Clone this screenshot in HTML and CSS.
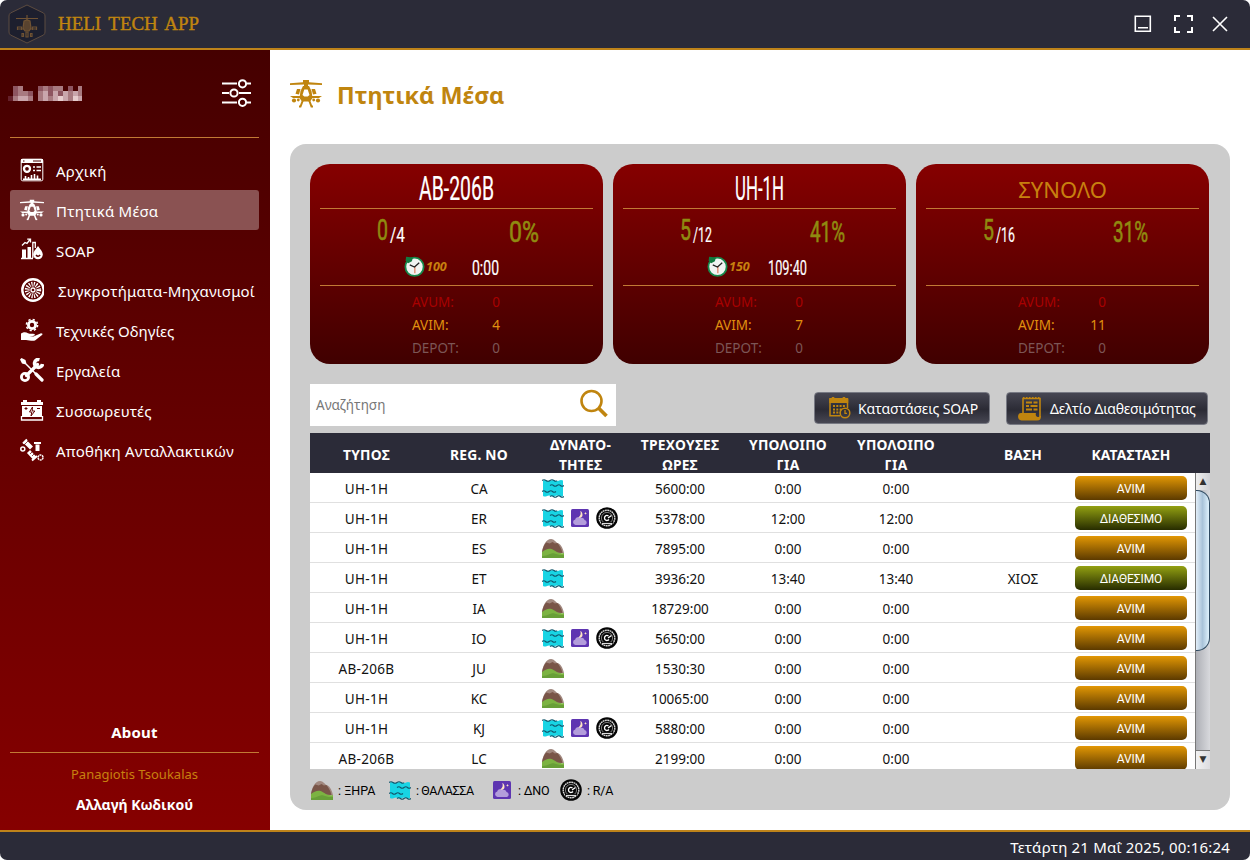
FILE: index.html
```html
<!DOCTYPE html>
<html lang="el">
<head>
<meta charset="utf-8">
<title>Heli Tech App</title>
<link rel="stylesheet" href="styles.css">
</head>
<body>
<svg class="defs" width="0" height="0">
  <symbol id="heli" viewBox="0 0 32 28">
    <path fill="currentColor" d="M0 3.300 13 2.200V0h6v2.200l13 1.100v1.700L18 4.400V7h-4V4.400L0 5z"/>
    <path fill="currentColor" fill-rule="evenodd" d="M13 6h6l2.500 5 1 7-2.500 3.500h-8L9.500 18l1-7zM14.300 9.500l-1.800 5.500 1.800 1.500h3.400l1.800-1.500-1.800-5.500z"/>
    <path fill="currentColor" d="M7 9h3.500L9 14.500l-3.500-.8zM25 9h-3.500l1.500 5.500 3.500-.8zM0 16h12v2H3zM32 16H20v2h9z"/>
    <circle cx="4" cy="20.500" r="2.100" fill="currentColor"/><circle cx="28" cy="20.500" r="2.100" fill="currentColor"/>
    <circle cx="8.300" cy="20" r="1.400" fill="currentColor"/><circle cx="23.700" cy="20" r="1.400" fill="currentColor"/>
    <path fill="none" stroke="currentColor" stroke-width="2" d="m13 20-2.500 6.500H9M19 20l2.500 6.500H23"/>
  </symbol>
  <symbol id="sea" viewBox="0 0 22 19">
    <path fill="#18d4e4" d="M1 1.500q2-1 4 0t4 0 4 0 4 0 4 0V17q-2 1-4 0t-4 0-4 0-4 0-4 0z"/>
    <path fill="none" stroke="#12566b" stroke-width="1.100" d="M0 1.500q2-1.500 4 0t4 0 4 0 3 0M8 6.500q2-1.500 3.500 0t3.500 0 3.500 0 3.500 0M0 12.500q2-1.500 3.500 0t3.500 0 3.500 0 3.500 0M8 17.500q2-1.500 3.500 0t3.500 0 3.500 0 3.500 0"/>
  </symbol>
  <symbol id="land" viewBox="0 0 23 19" preserveAspectRatio="none">
    <path fill="#a1887f" d="M0 13C1 7 4 0 9.500 0c3 0 5 3 6.500 4 3 .5 5.500 4 7 10z"/>
    <path fill="#795548" d="M0 13C1 8 3 4.500 4.500 3.500L8 4.500l3-1.500 2.500 1.500L16 4c2 2 4 5 5.500 10z"/>
    <path fill="#7cb342" d="M0 19v-6c3-2.500 7-4 10-3 4 1.300 6 5 13 4v5z"/>
    <path fill="#689f38" d="M0 19v-2c6 .5 9-3.500 13-2.500 3 .8 5 2 10 1.500v3z"/>
  </symbol>
  <symbol id="night" viewBox="0 0 18 18">
    <rect width="18" height="18" rx="1.500" fill="#5e35b1"/>
    <path fill="#ffe6c4" d="M9.300 2c1 3 .3 5-2.300 6.700 2.500.8 4.500-.6 4.500-2.700S10.700 2.700 9.300 2zM14.500 3l.5 1 1 .4-1 .4-.5 1-.5-1-1-.4 1-.4z"/>
    <path fill="#b39ddb" d="M4.500 16a2.800 2.800 0 0 1-.3-5.500 3 3 0 0 1 5-1.500 3 3 0 0 1 4.300 2A2.600 2.600 0 0 1 14 16z"/>
  </symbol>
  <symbol id="gauge" viewBox="0 0 22 22">
    <circle cx="11" cy="11" r="10.800" fill="#050505"/>
    <circle cx="11" cy="11" r="7.800" fill="none" stroke="#d8d8d8" stroke-width="1.400" stroke-dasharray="1.800 .5"/>
    <circle cx="11" cy="11" r="5.600" fill="none" stroke="#aaa" stroke-width=".7"/>
    <path fill="none" stroke="#fff" stroke-width="1.300" d="M15.500 8.500 12 11M12.500 9A2.500 2.500 0 1 0 13 12.500"/>
    <path fill="#050505" d="M5 15h12v1.500H5z"/>
    <path stroke="#ddd" stroke-width="1.200" d="M6 16.500h10"/>
  </symbol>
  <symbol id="clock" viewBox="0 0 20 20">
    <circle cx="10" cy="10.300" r="8.700" fill="#f1f4f2" stroke="#168a4c" stroke-width="1.700"/>
    <path fill="#127b40" d="M2 .8 8.500 1.500 7.500 5 4 7 1.500 4.500z"/>
    <path stroke="#e59980" stroke-width="1.500" d="M10.300 10v6.500"/>
    <path fill="none" stroke="#222" stroke-width="1.200" d="m5.500 8.500 4.500 2 4.500-4"/>
  </symbol>
</svg>

<div class="window">
  <header class="titlebar">
    <svg class="logo" viewBox="0 0 38 40">
      <path d="M19 1 35.500 9q1.500 1 1.500 3v16q0 2-1.500 3L19 39 2.500 31Q1 30 1 28V12q0-2 1.500-3z" fill="#1d1f2e" stroke="#5d4c40" stroke-width="1"/>
      <g stroke="#6f5233" stroke-width="1.200" fill="none"><path d="M8 14.500h22M19 11v6M9 25h20"/><path fill="#59432f" d="m16 17 3-1 3 1 1 7-2 3h-4l-2-3z"/><path d="M9.500 26v-3h4v3M24.500 26v-3h4v3M14 29.500v3h1.500v-3zM18 28v5h2v-5zM22.500 29.500v3h1.500v-3z"/></g>
    </svg>
    <svg class="brand" width="144" height="26"><text x="1" y="19" textLength="141" lengthAdjust="spacingAndGlyphs">HELI TECH APP</text></svg>
    <svg class="controls" width="96" height="20" fill="none" stroke="#fff" stroke-width="1.600">
      <path d="M2.300 2.300h15v15h-15zM5 13.800h10"/>
      <path stroke-width="2" d="M42 7V2h5M54 2h5v5M59 13v5h-5M47 18h-5v-5"/>
      <path d="m80 3 14 14M94 3 80 17"/>
    </svg>
  </header>

  <div class="middle">
    <aside class="sidebar">
      <div class="user">
        <svg class="mosaic" width="74" height="16" id="mosaic"></svg>
        <svg width="30" height="28" fill="none" stroke="#fff" stroke-width="2"><path d="M0 4.500h15M25 4.500h4M0 14h7M17 14h12M0 23.500h15M25 23.500h4"/><circle cx="20.500" cy="4.800" r="3.600"/><circle cx="12" cy="14" r="3.600"/><circle cx="20.500" cy="23.300" r="3.600"/></svg>
      </div>
      <nav class="menu">
        <a><svg viewBox="0 0 24 24"><rect x="1.200" y="1.200" width="21.600" height="21.600" rx="1.500" fill="none" stroke="#fff"/><path fill="#fff" d="M1 1h22v4H1z"/><path stroke="#4c0000" stroke-width="1.200" d="M3 3h1.500M13 3h8"/><circle cx="7" cy="10.800" r="3" fill="none" stroke="#fff" stroke-width="2.300"/><path stroke="#fff" stroke-width="1.600" d="M13 9h2M16.500 9H21M13 12.500h2M16.500 12.500H21M3 21.200h18M5.500 21v-3M8.500 21v-2M11.500 21v-4M14.500 21v-5M17.500 21v-3.500"/></svg><span>Αρχική</span></a>
        <a class="active"><svg viewBox="0 0 32 28"><use href="#heli"/></svg><span>Πτητικά Μέσα</span></a>
        <a><svg viewBox="0 0 24 24"><path fill="#fff" d="M2 11.500h4V20H2zM7.500 9H11v11H7.500z"/><path fill="none" stroke="#fff" stroke-width="1.300" d="M1 20.500h12M12.800 20V4.500h2.500V10M2 7.500l3-3 2 1 3-4M7.200 1.200H10.500V4.500"/><path fill="#fff" d="M18 8c3 4 4.800 6 4.800 8.500a4.800 4.800 0 0 1-9.600 0C13.200 14 15 12 18 8z"/><path stroke="#540000" stroke-width="1.400" d="M16 17q2 2.500 4.200 0" fill="none"/></svg><span>SOAP</span></a>
        <a><svg viewBox="0 0 24 24" fill="none" stroke="#fff"><circle cx="13" cy="12" r="10.700" stroke-width="2.400"/><circle cx="13" cy="12" r="5.800" stroke-width="4.800" stroke-dasharray="1.150 1.128"/><circle cx="13" cy="12" r="2" stroke-width="1.300"/></svg><span class="nudge">Συγκροτήματα-Μηχανισμοί</span></a>
        <a><svg viewBox="0 0 24 24"><circle cx="12" cy="7" r="3.600" fill="none" stroke="#fff" stroke-width="2.800"/><circle cx="12" cy="7" r="5.600" fill="none" stroke="#fff" stroke-width="1.500" stroke-dasharray="2.200 2.200"/><path fill="#fff" d="M1 15.500c3-2 5-1.500 7-.3 2 1 4.500.3 6.500.8 1 1-.3 2-2 2h-3l4 .6 7.500-3.300c1.500 0 2 1 1 1.800L15 22.500c-3 1-6-.5-9-.5H1z"/></svg><span class="tight">Τεχνικές Οδηγίες</span></a>
        <a><svg viewBox="0 0 24 24"><path stroke="#fff" stroke-width="3.200" stroke-linecap="round" d="m6.500 17.500 11-11M16 16l6 6"/><path stroke="#fff" stroke-width="1.500" d="M4 4l12 12"/><path fill="#fff" d="M0 1.500 1.500 0l4 2 .8 3-1.300 1.300L2 5.500z"/><circle cx="5" cy="19" r="3.600" fill="none" stroke="#fff" stroke-width="2.800"/><path fill="none" stroke="#fff" stroke-width="3.600" d="M19.500 1.500a4 4 0 1 0 3 4.500"/></svg><span>Εργαλεία</span></a>
        <a><svg viewBox="0 0 24 24"><path fill="#fff" d="M3 2h4v2h10V2h4v2h2v3H1V4h2zM2 8h20v11H2z"/><path fill="none" stroke="#fff" stroke-width="1.300" d="M1.500 18v4h21v-4"/><path fill="none" stroke="#620000" stroke-width="1" d="m12.500 9-3 5h2.300L11 18l3.800-5h-2.600zM4.500 10.500h3M6 9v3M17 10.500h3"/></svg><span>Συσσωρευτές</span></a>
        <a><svg viewBox="0 0 24 24" fill="none" stroke="#fff"><path stroke-width="4.200" d="m4.500 3 7 7M8.500 13.500l6.500 7"/><path stroke-width="2" d="M3 5.500 7 1.500M12 22.500 17 18M14 5h7"/><path stroke-width="4" d="M17.500 6.500V13"/><path stroke="#620000" stroke-width=".7" d="m5 6 4-4M10 16l3.500-3.500M12 18l3.500-3.500"/><circle cx="2.800" cy="11" r="2" stroke-width="1.500"/><circle cx="20.500" cy="19.500" r="2.500" stroke-width="1.500" stroke-dasharray="2 .6"/></svg><span>Αποθήκη Ανταλλακτικών</span></a>
      </nav>
      <div class="account">
        <a class="about">About</a>
        <div class="author">Panagiotis Tsoukalas</div>
        <a class="password">Αλλαγή Κωδικού</a>
      </div>
    </aside>

    <main class="content">
      <h1><svg viewBox="0 0 32 28"><use href="#heli"/></svg><span>Πτητικά Μέσα</span></h1>
      <section class="panel">
        <div class="cards" id="cards"></div>
        <div class="toolbar">
          <label class="search"><span>Αναζήτηση</span><svg width="30" height="30" fill="none" stroke="#c0850f"><circle cx="12.500" cy="12" r="10" stroke-width="2.600"/><path stroke-width="3.800" d="m19.500 19 8 8"/></svg></label>
          <button class="tool soap"><svg width="22" height="22" fill="none" stroke="#c0850f"><path stroke-width="1.500" d="M1 1.500v17.300h10M18.500 2v9"/><path fill="#c0850f" stroke="none" d="M.3 1h2.500V0h2.500v1h8.400V0h2.500v1h3v5H.3z"/><path stroke-width="2" stroke-dasharray="2 1.300" d="M4 9h12M4 12.500h9M4 15.500h7"/><circle cx="16" cy="16" r="4.800" stroke-width="1.500"/><path stroke-width="1.300" d="M16 13v3.300h2"/></svg><span>Καταστάσεις SOAP</span></button>
          <button class="tool report"><svg width="24" height="24" fill="none" stroke="#c0850f"><path stroke-width="1.600" d="M5 16V1.500h17V20"/><path stroke-width="2" stroke-dasharray="1.500 1.500" d="M5 1h17"/><path stroke-width="2" d="M8 5.500h6M15.500 5.500h4M8 9h3M12.500 9h7M8 12.500h6M15.500 12.500h4"/><path fill="#c0850f" stroke="none" d="M3 16h15c-1 3 1 4 2.500 4l2.500-1c0 3-1 4.500-4 4.500H3.500c-4.500 0-4.500-7.500-.5-7.500z"/></svg><span>Δελτίο Διαθεσιμότητας</span></button>
        </div>
        <div class="table">
          <div class="thead"><b>ΤΥΠΟΣ</b><b>REG. NO</b><b>ΔΥΝΑΤΟ-<br>ΤΗΤΕΣ</b><b>ΤΡΕΧΟΥΣΕΣ<br>ΩΡΕΣ</b><b>ΥΠΟΛΟΙΠΟ<br>ΓΙΑ</b><b>ΥΠΟΛΟΙΠΟ<br>ΓΙΑ</b><i></i><b>ΒΑΣΗ</b><b>ΚΑΤΑΣΤΑΣΗ</b></div>
          <div class="tbody">
            <div class="rows" id="rows"></div>
            <div class="scroll"><div class="up">▲</div><div class="track"><div class="thumb"></div></div><div class="down">▼</div></div>
          </div>
        </div>
        <div class="legend">
          <svg class="ico land"><use href="#land"/></svg><span class="l1">: ΞΗΡΑ</span>
          <svg class="ico sea"><use href="#sea"/></svg><span class="l2">: ΘΑΛΑΣΣΑ</span>
          <svg class="ico night"><use href="#night"/></svg><span class="l3">: ΔΝΟ</span>
          <svg class="ico gauge"><use href="#gauge"/></svg><span>: R/A</span>
        </div>
      </section>
    </main>
  </div>
  <footer class="statusbar"><span>Τετάρτη 21 Μαΐ 2025, 00:16:24</span></footer>
</div>
<script src="app.js"></script>
</body>
</html>
```
FILE: styles.css
```css
* { box-sizing: border-box; }
body { margin: 0; background: #fff; font-family: "Noto Sans", sans-serif; font-size: 14px; }
.defs { position: absolute; }
svg { display: block; flex: none; }
.window { width: 1250px; height: 860px; display: flex; flex-direction: column; border-radius: 7px; overflow: hidden; background: #fff; }

.titlebar { height: 50px; flex: none; background: #2b2b38; border-bottom: 2px solid #be831a; display: flex; align-items: center; padding: 0 21px 0 8px; }
.logo { width: 38px; height: 40px; }
.brand { margin-left: 11px; }
.brand text { font-family: "Liberation Serif", serif; font-size: 19px; word-spacing: 3px; fill: #c0850f; stroke: #c0850f; stroke-width: .4px; }
.controls { margin-left: auto; }

.middle { flex: 1; display: flex; min-height: 0; }
.sidebar { width: 270px; flex: none; padding: 0 11px 0 10px; background: linear-gradient(#450000, #860000); display: flex; flex-direction: column; }
.user { height: 88px; border-bottom: 1px solid #c27a35; display: flex; align-items: center; justify-content: space-between; padding: 0 7px 1px 0; }
.mosaic { margin: 2px 0 0 -2px; }
.menu { margin-top: 12px; }
.menu a { height: 40px; display: flex; align-items: center; border-radius: 3px; padding-left: 10px; color: #fff; font-size: 15px; letter-spacing: .2px; }
.menu a.active { background: #8a5252; }
.menu svg { width: 24px; height: 24px; margin-right: 12px; }
.menu span { position: relative; top: 1px; white-space: nowrap; }
.menu .nudge { left: 2px; }
.menu .tight { letter-spacing: 0; }
.account { margin-top: auto; height: 110px; text-align: center; color: #fff; }
.about { display: block; height: 33px; border-bottom: 1px solid #c27a35; font-weight: 700; font-size: 15px; letter-spacing: .2px; line-height: 24px; }
.author { color: #c8800f; font-size: 13px; line-height: 20px; margin-top: 11px; }
.password { display: block; font-weight: 700; font-size: 14px; line-height: 20px; margin-top: 11px; }

.content { flex: 1; padding: 28px 20px 20px; }
h1 { margin: 0; height: 66px; display: flex; align-items: flex-start; color: #c0850f; }
h1 svg { width: 32px; height: 32px; margin-right: 15px; }
h1 span { font-size: 23.400px; line-height: 35px; }
.panel { width: 940px; height: 666px; background: #ccc; border-radius: 16px; padding: 20px; }

.cards { display: flex; gap: 10px; }
.card { width: 293px; height: 200px; border-radius: 20px; background: linear-gradient(#860000, #400000); padding: 0 10px; }
.card-title { height: 45px; border-bottom: 1px solid #c27a35; display: flex; justify-content: center; align-items: flex-start; color: #c8800f; font-size: 22px; }
.card-title span { line-height: 32px; padding-top: 9px; }
.card-figures { height: 77px; border-bottom: 1px solid #c27a35; }
.narrow { overflow: visible; }
.narrow text { font-family: Roboto, sans-serif; fill: #fff; stroke: #fff; stroke-width: .2px; }
.counts, .flight { display: flex; align-items: flex-start; }
.counts { height: 47px; }
.narrow .ready { fill: #8f8b10; stroke: #8f8b10; stroke-width: .6px; }
.flight { padding-left: 84px; }
.flight .clock { width: 21px; height: 21px; }
.flight em { width: 42px; margin-left: 1px; font-size: 12.500px; font-weight: 700; line-height: 22px; color: #c8800f; }
.states { display: grid; grid-template-columns: 72px 24px; justify-content: start; padding: 5px 0 0 92px; line-height: 23px; font-size: 13.500px; }
.states span:nth-child(even) { text-align: center; }
.states .wide { margin-left: -8px; }
.avum { color: #a80000; }
.avim { color: #e0910f; }
.depot { color: #7c5656; }

.toolbar { height: 69px; padding-top: 20px; display: flex; align-items: flex-start; }
.search { width: 306px; height: 42px; background: #fff; display: flex; align-items: center; justify-content: space-between; padding: 0 7px 3px 6px; color: #777; font-size: 13.500px; }
.search span { padding-top: 3px; }
.tool { margin: 8px 0 0; height: 32px; padding: 0; border: 1px solid #777983; border-radius: 4px; background: linear-gradient(#464652, #2b2b35 55%, #474753); color: #fff; display: flex; align-items: center; font: 14px "Noto Sans", sans-serif; white-space: nowrap; }
.soap { width: 176px; margin-left: 198px; padding-left: 14px; gap: 7px; letter-spacing: -.1px; }
.report { width: 202px; height: 33px; margin-left: 16px; padding-left: 11px; gap: 8px; letter-spacing: -.2px; }

.table { width: 900px; }
.thead, .row { display: grid; grid-template-columns: 113px 112px 91px 108px 108px 108px 29px 88px 128px; align-items: center; text-align: center; }
.thead { height: 40px; background: #2b2b38; color: #fff; font-size: 13.800px; letter-spacing: .2px; line-height: 20px; padding-top: 2px; }
.tbody { height: 296px; display: flex; overflow: hidden; background: #fff; }
.rows { width: 885px; }
.row { height: 30px; border-bottom: 1px solid #e0e0e0; color: #111; font-size: 13.500px; padding-top: 2px; }
.row .type { letter-spacing: .3px; }
.caps { display: flex; align-items: center; gap: 7px; padding-left: 7px; margin-top: -1px; }
.ico.sea { width: 22px; height: 19px; }
.ico.land { width: 22px; height: 19px; }
.ico.night { width: 18px; height: 18px; }
.ico.gauge { width: 22px; height: 22px; }
.status { height: 24px; margin: -2px 8px 0; border-radius: 5px; color: #fff; font: 12px/26px Roboto, sans-serif; letter-spacing: -.1px; background: linear-gradient(#e29704, #5c3a00); }
.status.ok { background: linear-gradient(#93a012, #272c00); }

.scroll { width: 15px; display: flex; flex-direction: column; border-left: 1px solid #777; background: #d6d7db; font: 9px/17px "DejaVu Sans", sans-serif; text-align: center; color: #333; }
.up { height: 17px; background: linear-gradient(90deg, #eee, #cfd0d5); }
.track { flex: 1; background: linear-gradient(90deg, #aeb0b6, #d8d9dd); }
.thumb { height: 161px; border: 1px solid #2f4a61; border-left: 0; border-radius: 0 13px 13px 0; background: linear-gradient(90deg, #e2eef8, #a9c3d9 50%, #dff2fd); }
.down { height: 19px; border-top: 1px solid #777; background: linear-gradient(90deg, #f2f2f2, #dcdce0); }

.legend { height: 42px; display: flex; align-items: center; padding-left: 1px; font: 12.500px Roboto, sans-serif; letter-spacing: -.2px; color: #000; }
.legend span { margin-left: 5px; white-space: nowrap; padding-top: 1px; }
.legend .l1 { width: 51px; letter-spacing: 0; }
.legend .l2 { width: 77px; letter-spacing: -.4px; }
.legend .l3 { width: 42px; margin-left: 7px; }

.statusbar { height: 30px; flex: none; background: #2b2b38; border-top: 2px solid #be831a; display: flex; align-items: center; justify-content: flex-end; padding: 2px 20px 0 0; color: #fff; font-size: 15px; letter-spacing: .18px; }
```
FILE: app.js
```js
const icon = (name) => `<svg class="ico ${name}"><use href="#${name}"/></svg>`;

// Condensed lettering: each piece is squeezed to its own width.
const narrow = (text, width, size, cls = "", style = "") =>
  `<svg class="narrow" width="${width + 2}" height="${Math.ceil(size * 1.25)}" style="${style}"><text class="${cls}" x="1" y="${size}" font-size="${size}" textLength="${width}" lengthAdjust="spacingAndGlyphs">${text}</text></svg>`;

const cards = [
  { title: "AB-206B", tw: 75, ready: 0, total: 4, tlw: 15, pct: "0%", px: 188, pw: 30, hours: 100, left: "0:00", lx: 4, lw: 27, states: [0, 4, 0] },
  { title: "UH-1H", tw: 49, ready: 5, total: 12, tlw: 19, pct: "41%", px: 186, pw: 35, hours: 150, left: "109:40", lx: -3, lw: 39, states: [0, 7, 0] },
  { title: "ΣΥΝΟΛΟ", ready: 5, total: 16, tlw: 19, pct: "31%", px: 186, pw: 35, states: [0, 11, 0] },
];

document.getElementById("cards").innerHTML = cards.map((c) => `
  <article class="card">
    <div class="card-title">${c.tw ? narrow(c.title, c.tw, 33, "", "margin-top:3px") : `<span>${c.title}</span>`}</div>
    <div class="card-figures">
      <div class="counts">
        ${narrow(c.ready, 11, 30, "ready", "margin-left:56px;margin-top:1px")}
        ${narrow("/" + c.total, c.tlw, 21, "", "margin-top:12px")}
        ${narrow(c.pct, c.pw, 29, "ready", `margin-top:4px;margin-left:${c.px - 71 - c.tlw}px`)}
      </div>
      ${c.left ? `<div class="flight"><svg class="clock"><use href="#clock"/></svg><em>${c.hours}</em>${narrow(c.left, c.lw, 21, "", `margin-top:-2px;margin-left:${c.lx - 1}px`)}</div>` : ""}
    </div>
    <div class="states">
      <span class="avum">AVUM:</span><span class="avum">${c.states[0]}</span>
      <span class="avim">AVIM:</span><span class="avim ${c.states[1] > 9 ? "wide" : ""}">${c.states[1]}</span>
      <span class="depot">DEPOT:</span><span class="depot">${c.states[2]}</span>
    </div>
  </article>`).join("");

const full = ["sea", "night", "gauge"];
const fleet = [
  ["UH-1H", "CA", ["sea"], "5600:00", "0:00"],
  ["UH-1H", "ER", full, "5378:00", "12:00", "", true],
  ["UH-1H", "ES", ["land"], "7895:00", "0:00"],
  ["UH-1H", "ET", ["sea"], "3936:20", "13:40", "ΧΙΟΣ", true],
  ["UH-1H", "IA", ["land"], "18729:00", "0:00"],
  ["UH-1H", "IO", full, "5650:00", "0:00"],
  ["AB-206B", "JU", ["land"], "1530:30", "0:00"],
  ["UH-1H", "KC", ["land"], "10065:00", "0:00"],
  ["UH-1H", "KJ", full, "5880:00", "0:00"],
  ["AB-206B", "LC", ["land"], "2199:00", "0:00"],
];

document.getElementById("rows").innerHTML = fleet.map(([type, reg, caps, hours, rest, base = "", ok]) => `
  <div class="row"><span class="type">${type}</span><span>${reg}</span><span class="caps">${caps.map(icon).join("")}</span><span>${hours}</span><span>${rest}</span><span>${rest}</span><i></i><span>${base}</span><span class="status ${ok ? "ok" : ""}">${ok ? "ΔΙΑΘΕΣΙΜΟ" : "AVIM"}</span></div>`).join("");

// Pixelated user name, one row per string; digits pick the tint.
const tints = ["none", "#64202a", "#8d5560", "#a87a80", "#c9a6ac", "#e6cccd"];
const mosaic = ["023000232330203", "023320342424343", "134430343454354"];
document.getElementById("mosaic").innerHTML = mosaic.map((line, y) =>
  [...line].map((t, x) => `<rect x="${x * 5}" y="${y * 5}" width="5" height="5" fill="${tints[t]}"/>`).join("")).join("");
```
